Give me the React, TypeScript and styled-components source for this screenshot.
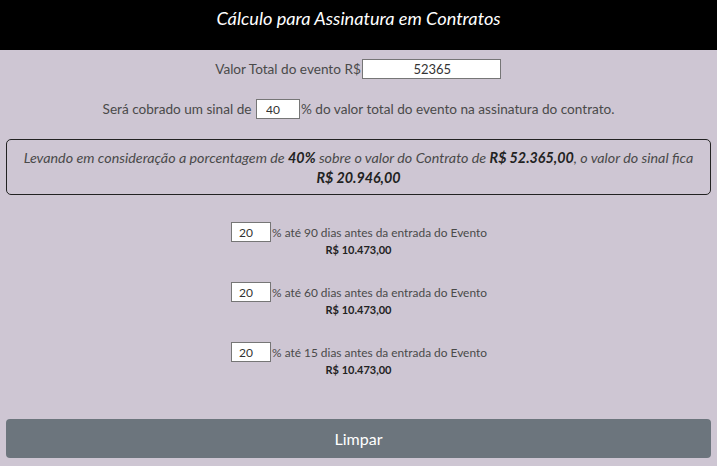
import React from "react";
import styled, { createGlobalStyle } from "styled-components";

const Global = createGlobalStyle`
  html, body { margin: 0; padding: 0; }
  body {
    background: #cec6d3;
    font-family: Lato, "Open Sans", sans-serif;
    color: #4a4a4a;
  }
`;

const Header = styled.header`
  height: 50px;
  background: #000;
  display: flex;
  justify-content: center;
  padding-top: 7px;
  box-sizing: border-box;
`;

const Title = styled.h1`
  margin: 0;
  font-size: 18.2px;
  font-weight: 400;
  font-style: italic;
  color: #fff;
  line-height: 22px;
`;

const Main = styled.main`
  padding: 0 6px;
  display: flex;
  flex-direction: column;
  align-items: stretch;
`;

const Line = styled.div<{ $top: number }>`
  margin-top: ${(p) => p.$top}px;
  display: flex;
  justify-content: center;
  align-items: center;
  height: 20px;
  font-size: 13.6px;
  color: #4a4a4a;
`;

const Field = styled.input<{ $w: number; $pl?: number; $center?: boolean }>`
  width: ${(p) => p.$w}px;
  height: 20px;
  box-sizing: border-box;
  border: 1px solid #767676;
  background: #fff;
  margin: 0 1px;
  padding: 0 0 0 ${(p) => p.$pl ?? 2}px;
  font-family: inherit;
  font-size: ${(p) => (p.$center ? 13 : 12)}px;
  color: #333;
  text-align: ${(p) => (p.$center ? "center" : "left")};
  outline: none;
`;

const Summary = styled.div`
  margin-top: 20px;
  height: 56px;
  box-sizing: border-box;
  border: 1px solid #222;
  border-radius: 5px;
  padding: 8px 4px 0;
  text-align: center;
  font-style: italic;
  font-size: 14.3px;
  line-height: 20px;
  color: #4a4a4a;
  b { color: #222; font-weight: 700; }
`;

const Groups = styled.div`
  margin-top: 27px;
  display: flex;
  flex-direction: column;
  gap: 23px;
`;

const Group = styled.div`
  display: flex;
  flex-direction: column;
  align-items: center;
`;

const GroupLine = styled.div`
  display: flex;
  align-items: center;
  height: 20px;
  font-size: 11.9px;
  color: #4a4a4a;
`;

const Amount = styled.div`
  height: 17px;
  line-height: 16px;
  font-size: 11px;
  font-weight: 700;
  color: #222;
`;

const Button = styled.button`
  margin-top: 40px;
  height: 39px;
  border: none;
  border-radius: 4px;
  background: #6c757d;
  color: #fff;
  font-family: inherit;
  font-weight: 400;
  font-size: 16px;
`;

const parcels = [90, 60, 15];

export default function App() {
  return (
    <>
      <Global />
      <Header>
        <Title>Cálculo para Assinatura em Contratos</Title>
      </Header>
      <Main>
        <Line $top={9}>
          Valor Total do evento R$
          <Field $w={139} $center defaultValue="52365" />
        </Line>
        <Line $top={20}>
          Será cobrado um sinal de&nbsp;
          <Field $w={44} $pl={9} defaultValue="40" />
          % do valor total do evento na assinatura do contrato.
        </Line>
        <Summary>
          Levando em consideração a porcentagem de <b>40%</b> sobre o valor do Contrato de{" "}
          <b>R$ 52.365,00</b>, o valor do sinal fica
          <br />
          <b>R$ 20.946,00</b>
        </Summary>
        <Groups>
          {parcels.map((d) => (
            <Group key={d}>
              <GroupLine>
                <Field $w={40} $pl={7} defaultValue="20" />
                % até {d} dias antes da entrada do Evento
              </GroupLine>
              <Amount>R$ 10.473,00</Amount>
            </Group>
          ))}
        </Groups>
        <Button>Limpar</Button>
      </Main>
    </>
  );
}
